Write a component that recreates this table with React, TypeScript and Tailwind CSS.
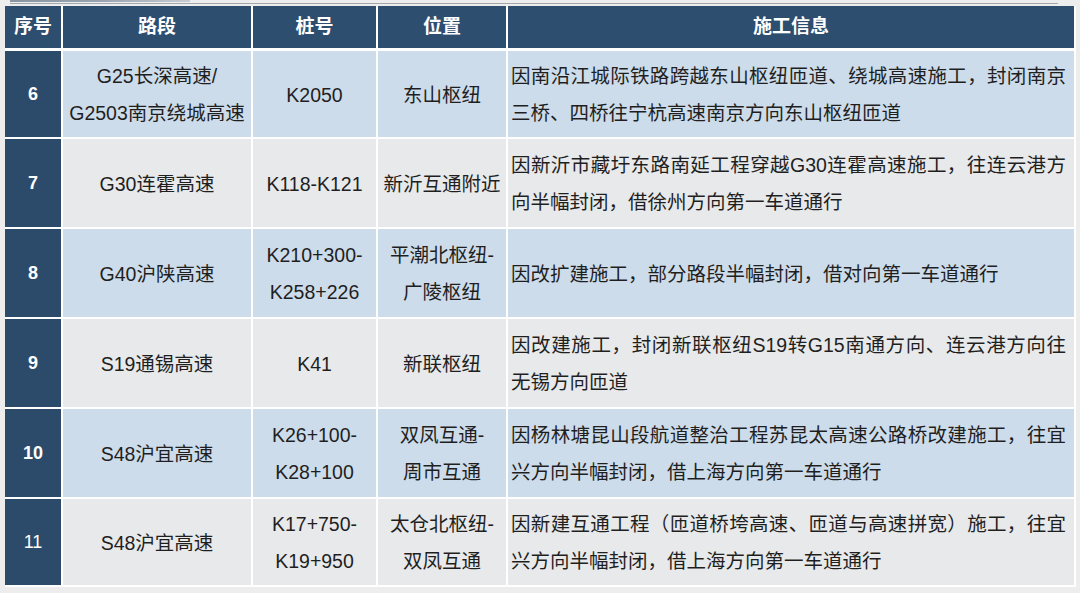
const rows = [
  {
    no: "6",
    road: ["G25长深高速/", "G2503南京绕城高速"],
    stake: ["K2050"],
    place: ["东山枢纽"],
    info: ["因南沿江城际铁路跨越东山枢纽匝道、绕城高速施工，封闭南京", "三桥、四桥往宁杭高速南京方向东山枢纽匝道"],
    bold: true,
  },
  {
    no: "7",
    road: ["G30连霍高速"],
    stake: ["K118-K121"],
    place: ["新沂互通附近"],
    info: ["因新沂市藏圩东路南延工程穿越G30连霍高速施工，往连云港方", "向半幅封闭，借徐州方向第一车道通行"],
    bold: true,
  },
  {
    no: "8",
    road: ["G40沪陕高速"],
    stake: ["K210+300-", "K258+226"],
    place: ["平潮北枢纽-", "广陵枢纽"],
    info: ["因改扩建施工，部分路段半幅封闭，借对向第一车道通行"],
    bold: true,
  },
  {
    no: "9",
    road: ["S19通锡高速"],
    stake: ["K41"],
    place: ["新联枢纽"],
    info: ["因改建施工，封闭新联枢纽S19转G15南通方向、连云港方向往", "无锡方向匝道"],
    bold: true,
  },
  {
    no: "10",
    road: ["S48沪宜高速"],
    stake: ["K26+100-", "K28+100"],
    place: ["双凤互通-", "周市互通"],
    info: ["因杨林塘昆山段航道整治工程苏昆太高速公路桥改建施工，往宜", "兴方向半幅封闭，借上海方向第一车道通行"],
    bold: true,
  },
  {
    no: "11",
    road: ["S48沪宜高速"],
    stake: ["K17+750-", "K19+950"],
    place: ["太仓北枢纽-", "双凤互通"],
    info: ["因新建互通工程（匝道桥垮高速、匝道与高速拼宽）施工，往宜", "兴方向半幅封闭，借上海方向第一车道通行"],
    bold: false,
  },
];

const heights = ["h-[86px]", "h-[88px]", "h-[88px]", "h-[88px]", "h-[88px]", "h-[86px]"];

function Lines({ lines }: { lines: string[] }) {
  return (
    <div className="flex flex-col items-center">
      {lines.map((line) => (
        <span key={line} className="whitespace-nowrap">
          {line}
        </span>
      ))}
    </div>
  );
}

export default function App() {
  return (
    <div
      className="h-[593px] w-[1080px] overflow-hidden bg-[#ededed] text-[#1f1f1f]"
      style={{ fontFamily: '"Liberation Sans", "Noto Sans CJK SC", sans-serif' }}
    >
      <div className="flex h-[3px] items-start">
        <div className="ml-[10px] h-[2px] w-[180px] bg-gradient-to-r from-[#8b96a3] via-[#9aa4b0] to-[#c8ccd1]" />
      </div>
      <div className="ml-[10px] h-px w-[1048px] bg-[#a3a8ad]" />
      <div className="h-[2px]" />

      <div className="ml-[5px] flex w-[1071px] flex-col gap-[2px] bg-white pb-[2px] pr-[2px]">
        <div className="mb-px grid h-[42px] grid-cols-[56px_188px_123px_128px_566px] gap-x-[2px] text-[19px] font-bold text-white">
          {["序号", "路段", "桩号", "位置", "施工信息"].map((title) => (
            <div key={title} className="flex items-center justify-center bg-[#2d4e6f]">
              {title}
            </div>
          ))}
        </div>

        {rows.map((row, index) => {
          const cellBg = index % 2 === 0 ? "bg-[#cddcea]" : "bg-[#e8e9eb]";
          return (
            <div
              key={row.no}
              className={`grid ${heights[index]} grid-cols-[56px_188px_123px_128px_566px] gap-x-[2px] text-[19.5px] leading-[37px]`}
            >
              <div
                className={`flex items-center justify-center bg-[#2c4b6b] text-[18px] text-white ${
                  row.bold ? "font-bold" : "font-normal"
                }`}
              >
                {row.no}
              </div>
              <div className={`flex items-center justify-center pt-[2px] ${cellBg}`}>
                <Lines lines={row.road} />
              </div>
              <div className={`flex items-center justify-center pt-[2px] ${cellBg}`}>
                <Lines lines={row.stake} />
              </div>
              <div className={`flex items-center justify-center pt-[2px] ${cellBg}`}>
                <Lines lines={row.place} />
              </div>
              <div className={`flex flex-col justify-center pl-[3px] pr-[8px] pt-[2px] ${cellBg}`}>
                {row.info.map((line, i) => (
                  <p
                    key={line}
                    className={`whitespace-nowrap ${
                      i === 0 && row.info.length > 1 ? "text-justify [text-align-last:justify]" : "text-left"
                    }`}
                  >
                    {line}
                  </p>
                ))}
              </div>
            </div>
          );
        })}
      </div>
    </div>
  );
}
